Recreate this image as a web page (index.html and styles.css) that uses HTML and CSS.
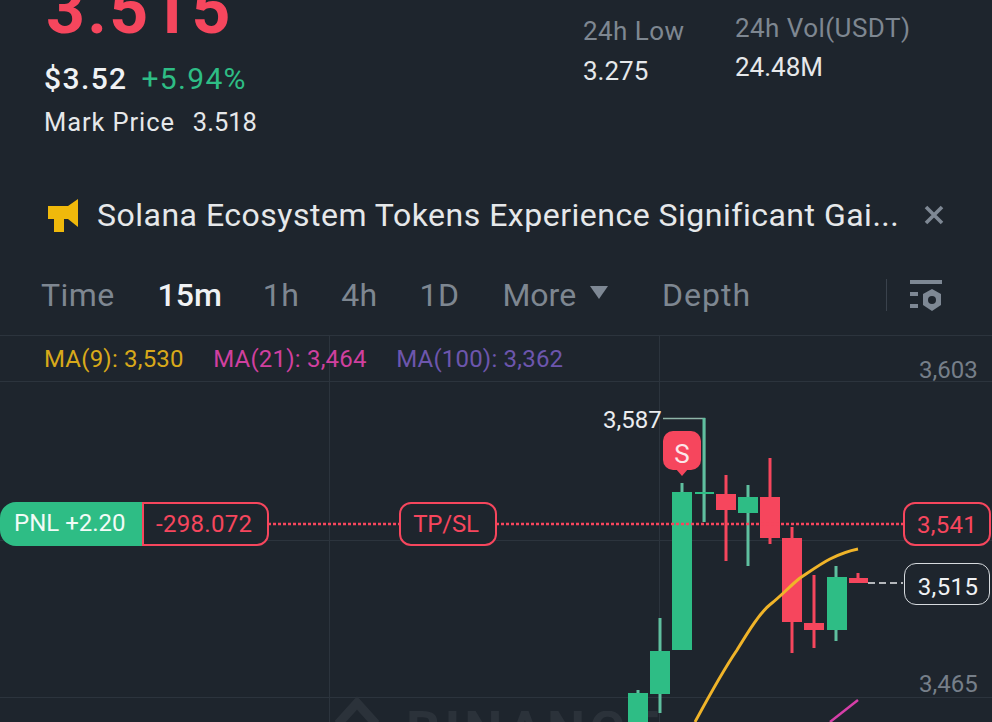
FILE: index.html
```html
<!DOCTYPE html>
<html lang="en">
<head>
<meta charset="utf-8">
<title>SOL perpetual chart</title>
<link rel="stylesheet" href="styles.css">
</head>
<body>
<main class="page">
  <header class="ticker">
    <div class="price-col">
      <div class="last-price">3.515</div>
      <div class="quote-row"><span class="usd">$3.52</span><span class="change">+5.94%</span></div>
      <div class="mark-row"><span class="mark-label">Mark Price</span><span>3.518</span></div>
    </div>
    <div class="stat stat-low"><div class="stat-label">24h Low</div><div class="stat-value">3.275</div></div>
    <div class="stat stat-vol"><div class="stat-label">24h Vol(USDT)</div><div class="stat-value">24.48M</div></div>
  </header>

  <section class="news">
    <svg class="horn" viewBox="0 0 31 33" aria-hidden="true"><path d="M0 7H20L30 0V28L20 20H16V33H6V20H0Z" fill="#f0b90b"/></svg>
    <span class="news-text">Solana Ecosystem Tokens Experience Significant Gai...</span>
    <svg class="close" viewBox="0 0 20 20" aria-hidden="true"><path d="M2 2L18 18M18 2L2 18" stroke="#7e8894" stroke-width="3.6"/></svg>
  </section>

  <nav class="tabs">
    <span class="tab tab-time">Time</span>
    <span class="tab tab-active">15m</span>
    <span class="tab tab-1h">1h</span>
    <span class="tab tab-4h">4h</span>
    <span class="tab tab-1d">1D</span>
    <span class="tab tab-more">More<svg class="caret" viewBox="0 0 18 13" aria-hidden="true"><path d="M0 0H18L9 13Z" fill="#7e8894"/></svg></span>
    <span class="tab tab-depth">Depth</span>
    <span class="tab-divider"></span>
    <svg class="settings" viewBox="0 0 34 34" aria-hidden="true">
      <path d="M1 2H33V6H1ZM1 14H9V18H1ZM1 26H9V30H1Z" fill="#7e8894"/>
      <path d="M23 11L32 16V27L23 33L14 27V16Z" fill="#7e8894"/>
      <circle cx="23" cy="22" r="4" fill="#1e252d"/>
    </svg>
  </nav>

  <section class="chart">
    <span class="watermark">BINANCE</span>
    <svg class="plot" viewBox="0 335 992 387" aria-hidden="true">
      <g class="grid">
        <path d="M0 335.5H992M0 381.5H992M0 540.5H992M0 697.5H992M329.5 335V722M659.5 335V722"/>
      </g>
      <path class="mark" d="M338 724L357 703L376 724"/>
      <path d="M663 418.5H704.5V522" fill="none" stroke="#8fb5a8" stroke-width="1.5"/>
      <g class="up">
        <path class="wick" d="M638 690V722M660 618V713M682 483V650M704 418V522M748 485V566M836 566V641"/>
        <rect x="628" y="693" width="20" height="29"/>
        <rect x="650" y="651" width="20" height="43"/>
        <rect x="672" y="492" width="20" height="158"/>
        <rect x="695" y="492" width="19" height="2"/>
        <rect x="738" y="497" width="20" height="16"/>
        <rect x="827" y="577" width="20" height="53"/>
      </g>
      <g class="down">
        <path class="wick" d="M726 475V561M770 458V544M792 527V653M814 575V648M858 573V583"/>
        <rect x="716" y="494" width="20" height="16"/>
        <rect x="760" y="497" width="20" height="41"/>
        <rect x="782" y="538" width="20" height="84"/>
        <rect x="804" y="623" width="20" height="7"/>
        <rect x="849" y="578" width="19" height="5"/>
      </g>
      <path class="ma-yellow" d="M695 722C708 698 722 672 737 650C748 632 760 612 772 603C782 595 790 586 800 578C812 570 822 563 830 559C840 554 848 551 858 549"/>
      <path class="ma-pink" d="M830 722L858 700"/>
      <path class="pos-line" d="M268 524H400M496 524H903"/>
      <path class="last-line" d="M868 583H903"/>
    </svg>

    <div class="ma-row">
      <span class="ma ma-9">MA(9): 3,530</span>
      <span class="ma ma-21">MA(21): 3,464</span>
      <span class="ma ma-100">MA(100): 3,362</span>
    </div>

    <span class="axis-label axis-top">3,603</span>
    <span class="axis-label axis-bottom">3,465</span>
    <span class="high-label">3,587</span>

    <div class="sell-badge">S</div>

    <div class="pnl">
      <span class="pnl-gain">PNL +2.20</span>
      <span class="pnl-loss">-298.072</span>
    </div>
    <div class="tag tag-tpsl">TP/SL</div>
    <div class="tag tag-entry">3,541</div>
    <div class="tag tag-last">3,515</div>
  </section>
</main>
</body>
</html>
```

FILE: styles.css
```css
* { box-sizing: border-box; }

html, body {
  margin: 0;
  height: 100%;
  background: #1e252d;
  overflow: hidden;
}

.page {
  width: 992px;
  height: 722px;
  overflow: hidden;
  font-family: Roboto, "Liberation Sans", sans-serif;
  color: #eaecef;
  display: flex;
  flex-direction: column;
}

.ticker {
  display: flex;
  flex: none;
  height: 201px;
  margin-top: -22px;
  padding-left: 44px;
}

.price-col {
  width: 539px;
  display: flex;
  flex-direction: column;
}

.last-price {
  font-size: 68px;
  line-height: 70px;
  font-weight: 700;
  color: #f6465d;
  margin-top: -3px;
  margin-left: 2px;
  letter-spacing: 2.2px;
}

.quote-row {
  display: flex;
  align-items: baseline;
  gap: 14px;
  margin-top: 15px;
  height: 38px;
  line-height: 38px;
}

.usd {
  font-size: 30px;
  font-weight: 500;
  letter-spacing: 1.4px;
  color: #f0f2f4;
}

.change {
  font-size: 30px;
  color: #2ebd85;
  letter-spacing: 1.3px;
}

.mark-row {
  display: flex;
  gap: 18px;
  font-size: 25.5px;
  line-height: 34px;
  margin-top: 7px;
  color: #e6e8ea;
}

.mark-label { letter-spacing: 0.9px; }

.stat-low {
  width: 152px;
  padding-top: 36px;
}

.stat-vol {
  padding-top: 33px;
}

.stat-label {
  font-size: 26px;
  line-height: 34px;
  letter-spacing: 0.45px;
  color: #7e8791;
}

.stat-value {
  font-size: 26px;
  line-height: 34px;
  margin-top: 6px;
  color: #e6e8ea;
}

.stat-vol .stat-value { margin-top: 5px; }

.news {
  display: flex;
  flex: none;
  align-items: center;
  height: 70px;
  padding-top: 2px;
  padding-left: 48px;
}

.horn {
  width: 31px;
  height: 33px;
  flex: none;
}

.news-text {
  margin-left: 18px;
  font-size: 32px;
  letter-spacing: 0.5px;
  white-space: nowrap;
  color: #e6e8ea;
  width: 802px;
}

.close {
  width: 20px;
  height: 20px;
  margin-left: 25px;
  flex: none;
}

.tabs {
  display: flex;
  flex: none;
  align-items: center;
  height: 86px;
  padding-top: 6px;
  padding-left: 41px;
  font-size: 32px;
  letter-spacing: 0.4px;
  color: #7e8791;
}

.tab {
  white-space: nowrap;
}

.tab-time { margin-right: 43px; }
.tab-1h, .tab-4h { margin-right: 42px; }
.tab-1d { margin-right: 43px; }

.tab-active {
  color: #f0f2f4;
  font-weight: 500;
  letter-spacing: 0;
  margin-right: 41px;
}

.tab-more {
  display: flex;
  align-items: center;
  gap: 14px;
  margin-right: 54px;
  letter-spacing: 0;
}

.caret {
  width: 18px;
  height: 13px;
  margin-top: -6px;
}

.tab-depth {
  letter-spacing: 1px;
  margin-right: 135px;
}

.tab-divider {
  width: 1px;
  height: 32px;
  background: #3a424c;
}

.settings {
  width: 34px;
  height: 34px;
  margin-left: 22px;
}

.chart {
  position: relative;
  flex: 1;
  min-height: 0;
  font-size: 24px;
}

.plot {
  position: absolute;
  inset: 0;
  width: 992px;
  height: 387px;
}

.grid path {
  fill: none;
  stroke: #2c343d;
  stroke-width: 1;
}

.mark {
  fill: none;
  stroke: #2b323a;
  stroke-width: 9;
}

.up rect { fill: #2ebd85; }
.down rect { fill: #f6465d; }
.wick { fill: none; stroke-width: 3; }
.up .wick { stroke: #5fbf9f; }
.down .wick { stroke: #f6465d; }

.ma-yellow { fill: none; stroke: #f0b429; stroke-width: 3; }
.ma-pink { fill: none; stroke: #d63fa8; stroke-width: 2.5; }
.pos-line { fill: none; stroke: #f6465d; stroke-width: 2.5; stroke-dasharray: 3 2; }
.last-line { fill: none; stroke: #e6e8ea; stroke-width: 1.5; stroke-dasharray: 7 4; }

.ma-row {
  position: absolute;
  left: 44px;
  top: 6px;
  display: flex;
  gap: 29.5px;
  line-height: 36px;
  font-size: 24px;
  letter-spacing: 0.2px;
  white-space: nowrap;
}

.ma-9 { color: #d8a91a; }
.ma-21 { color: #d0409f; }
.ma-100 { color: #6d56ad; }

.axis-label {
  position: absolute;
  left: 919px;
  font-size: 24px;
  line-height: 30px;
  color: #767f89;
}

.axis-top { top: 20px; }
.axis-bottom { top: 334px; }

.high-label {
  position: absolute;
  left: 603px;
  top: 70px;
  font-size: 24px;
  line-height: 30px;
  color: #eaecef;
}

.watermark {
  position: absolute;
  left: 406px;
  top: 376px;
  font-size: 54px;
  line-height: 40px;
  height: 11px;
  overflow: hidden;
  font-weight: 700;
  letter-spacing: 4px;
  color: #2b323a;
}

.sell-badge {
  position: absolute;
  left: 663px;
  top: 96px;
  width: 38px;
  height: 39px;
  border-radius: 10px;
  background: #f6465d;
  color: #fbe6e9;
  font-size: 26px;
  line-height: 46px;
  text-align: center;
}

.sell-badge::after {
  content: "";
  position: absolute;
  left: 13px;
  bottom: -6px;
  border-left: 6px solid transparent;
  border-right: 6px solid transparent;
  border-top: 7px solid #f6465d;
}

.pnl {
  position: absolute;
  left: 0;
  top: 167px;
  display: flex;
  height: 44px;
  line-height: 44px;
  font-size: 24px;
}

.pnl-gain {
  width: 142px;
  padding-left: 14px;
  line-height: 43px;
  background: #2ebd85;
  color: #f2fbf7;
  border-radius: 16px 0 0 16px;
}

.pnl-loss {
  width: 127px;
  padding-left: 12px;
  line-height: 41px;
  letter-spacing: 0.3px;
  border: 2.5px solid #f6465d;
  border-radius: 0 12px 12px 0;
  color: #f6465d;
  background: #1e252d;
}

.tag {
  position: absolute;
  text-align: center;
  border: 2.5px solid #f6465d;
  border-radius: 12px;
  color: #f6465d;
  background: #1e252d;
  line-height: 41px;
  font-size: 24px;
  height: 44px;
}

.tag-tpsl { left: 399px; top: 167px; width: 98px; padding-right: 4px; letter-spacing: -0.2px; }
.tag-entry { left: 903px; top: 167px; width: 88px; line-height: 43px; letter-spacing: 0.3px; }

.tag-last {
  left: 904px;
  top: 228px;
  width: 86px;
  height: 42px;
  line-height: 47px;
  padding-left: 2px;
  letter-spacing: 0.4px;
  border: 1.5px solid #d6dade;
  color: #f0f2f4;
}
```
